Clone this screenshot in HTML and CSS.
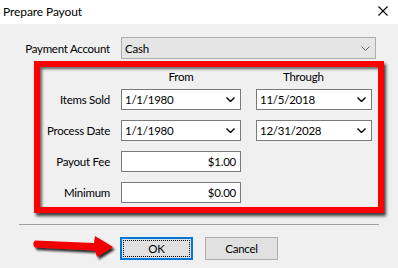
FILE: index.html
```html
<!DOCTYPE html>
<html>
<head>
<meta charset="utf-8">
<link rel="stylesheet" href="styles.css">
</head>
<body>
<div class="window">
  <div class="titlebar">
    <span class="title">Prepare Payout</span>
    <svg class="close" width="10" height="10" viewBox="0 0 10 10"><path d="M0.5 0.5L9.5 9.5M9.5 0.5L0.5 9.5" stroke="#000" stroke-width="1.1" fill="none"/></svg>
  </div>
  <div class="content">
    <div class="acct-row">
      <span class="label">Payment Account</span>
      <div class="combo readonly"><span>Cash</span>
        <svg class="chev" width="9" height="5" viewBox="0 0 9 5"><path d="M0.5 0.5L4.5 4.5L8.5 0.5" stroke="#606060" stroke-width="1" fill="none"/></svg>
      </div>
    </div>
    <div class="highlight">
      <div class="grid hdr">
        <span></span>
        <span class="from">From</span>
        <span class="through">Through</span>
      </div>
      <div class="grid row">
        <span class="label">Items Sold</span>
        <div class="combo"><span>1/1/1980</span><svg class="chev" width="9" height="5" viewBox="0 0 9 5"><path d="M0.5 0.5L4.5 4.5L8.5 0.5" stroke="#000" stroke-width="1.4" fill="none"/></svg></div>
        <div class="combo"><span>11/5/2018</span><svg class="chev" width="9" height="5" viewBox="0 0 9 5"><path d="M0.5 0.5L4.5 4.5L8.5 0.5" stroke="#000" stroke-width="1.4" fill="none"/></svg></div>
      </div>
      <div class="grid row">
        <span class="label">Process Date</span>
        <div class="combo"><span>1/1/1980</span><svg class="chev" width="9" height="5" viewBox="0 0 9 5"><path d="M0.5 0.5L4.5 4.5L8.5 0.5" stroke="#000" stroke-width="1.4" fill="none"/></svg></div>
        <div class="combo"><span>12/31/2028</span><svg class="chev" width="9" height="5" viewBox="0 0 9 5"><path d="M0.5 0.5L4.5 4.5L8.5 0.5" stroke="#000" stroke-width="1.4" fill="none"/></svg></div>
      </div>
      <div class="grid row">
        <span class="label">Payout Fee</span>
        <div class="field">$1.00</div>
      </div>
      <div class="grid row">
        <span class="label">Minimum</span>
        <div class="field">$0.00</div>
      </div>
    </div>
    <div class="sep"></div>
    <div class="buttons">
      <button class="btn ok"><span class="focus">OK</span></button>
      <button class="btn">Cancel</button>
    </div>
    <svg class="arrow" width="96" height="32" viewBox="0 0 96 32">
      <defs>
        <filter id="sh" x="-20%" y="-40%" width="140%" height="180%">
          <feDropShadow dx="2" dy="2.5" stdDeviation="1.2" flood-color="#000" flood-opacity="0.85"/>
        </filter>
      </defs>
      <path filter="url(#sh)" d="M7 8.5 L66 11 L67 4 L85 15 L69 25 L67 18.5 L7 15.5 Q3.5 12 7 8.5 Z" fill="#f20000"/>
    </svg>
  </div>
</div>
</body>
</html>
```

FILE: styles.css
```css
* { box-sizing: border-box; }
html, body { margin: 0; padding: 0; }
body {
  width: 398px;
  height: 268px;
  overflow: hidden;
  background: #f0f0f0;
  font-family: Lato, "Noto Sans", sans-serif;
  font-size: 11.5px;
  letter-spacing: -0.25px;
  color: #000;
}
.window { position: relative; width: 398px; height: 268px; }
.titlebar {
  height: 24px;
  background: #fff;
  display: flex;
  align-items: center;
  justify-content: space-between;
  padding: 0 10px 2px 3px;
}
.title { font-size: 12px; letter-spacing: -0.1px; }
.content { position: relative; }
.acct-row {
  display: flex;
  align-items: center;
  margin-top: 13px;
  gap: 11px;
}
.label {
  display: block;
  text-align: right;
}
.acct-row .label { width: 110px; }
.combo {
  height: 21px;
  border: 1px solid #7a7a7a;
  background: #fff;
  display: flex;
  align-items: center;
  justify-content: space-between;
  padding: 0 5px 0 3px;
}
.combo.readonly {
  width: 255px;
  height: 22px;
  background: #e5e5e5;
  border-color: #adadad;
  padding-right: 5px;
}
.highlight {
  margin: 2px 0 0 34px;
  width: 350px;
  height: 152px;
  border: 6px solid #ff0000;
  box-shadow: 2px 3px 3px rgba(0,0,0,0.75), inset 2px 2px 3px rgba(0,0,0,0.6);
}
.grid {
  display: grid;
  grid-template-columns: 70px 120px 120px;
  column-gap: 11px;
}
.grid > :nth-child(3) { margin-left: 4px; }
.hdr { height: 22px; padding-top: 3px; }
.from { text-align: center; }
.through { padding-left: 27px; }
.row { height: 21px; margin-bottom: 10px; align-items: center; }
.field {
  height: 21px;
  border: 1px solid #7a7a7a;
  background: #fff;
  text-align: right;
  padding: 0 4px;
  line-height: 19px;
}
.sep {
  margin: 11px 0 0 19px;
  width: 360px;
  height: 1px;
  background: #a0a0a0;
}
.buttons {
  display: flex;
  gap: 12px;
  margin: 12px 0 0 120px;
}
.btn {
  width: 73px;
  height: 23px;
  background: #e1e1e1;
  border: 1px solid #adadad;
  font-family: inherit;
  font-size: 11.5px;
  letter-spacing: -0.25px;
  color: #000;
  padding: 0;
  display: flex;
  align-items: center;
  justify-content: center;
}
.btn.ok { border: 2px solid #0078d7; padding: 1px; }
.focus {
  width: 100%;
  height: 100%;
  border: 1px dotted #000;
  display: flex;
  align-items: center;
  justify-content: center;
}
.arrow { position: absolute; left: 28px; top: 195px; }
```
